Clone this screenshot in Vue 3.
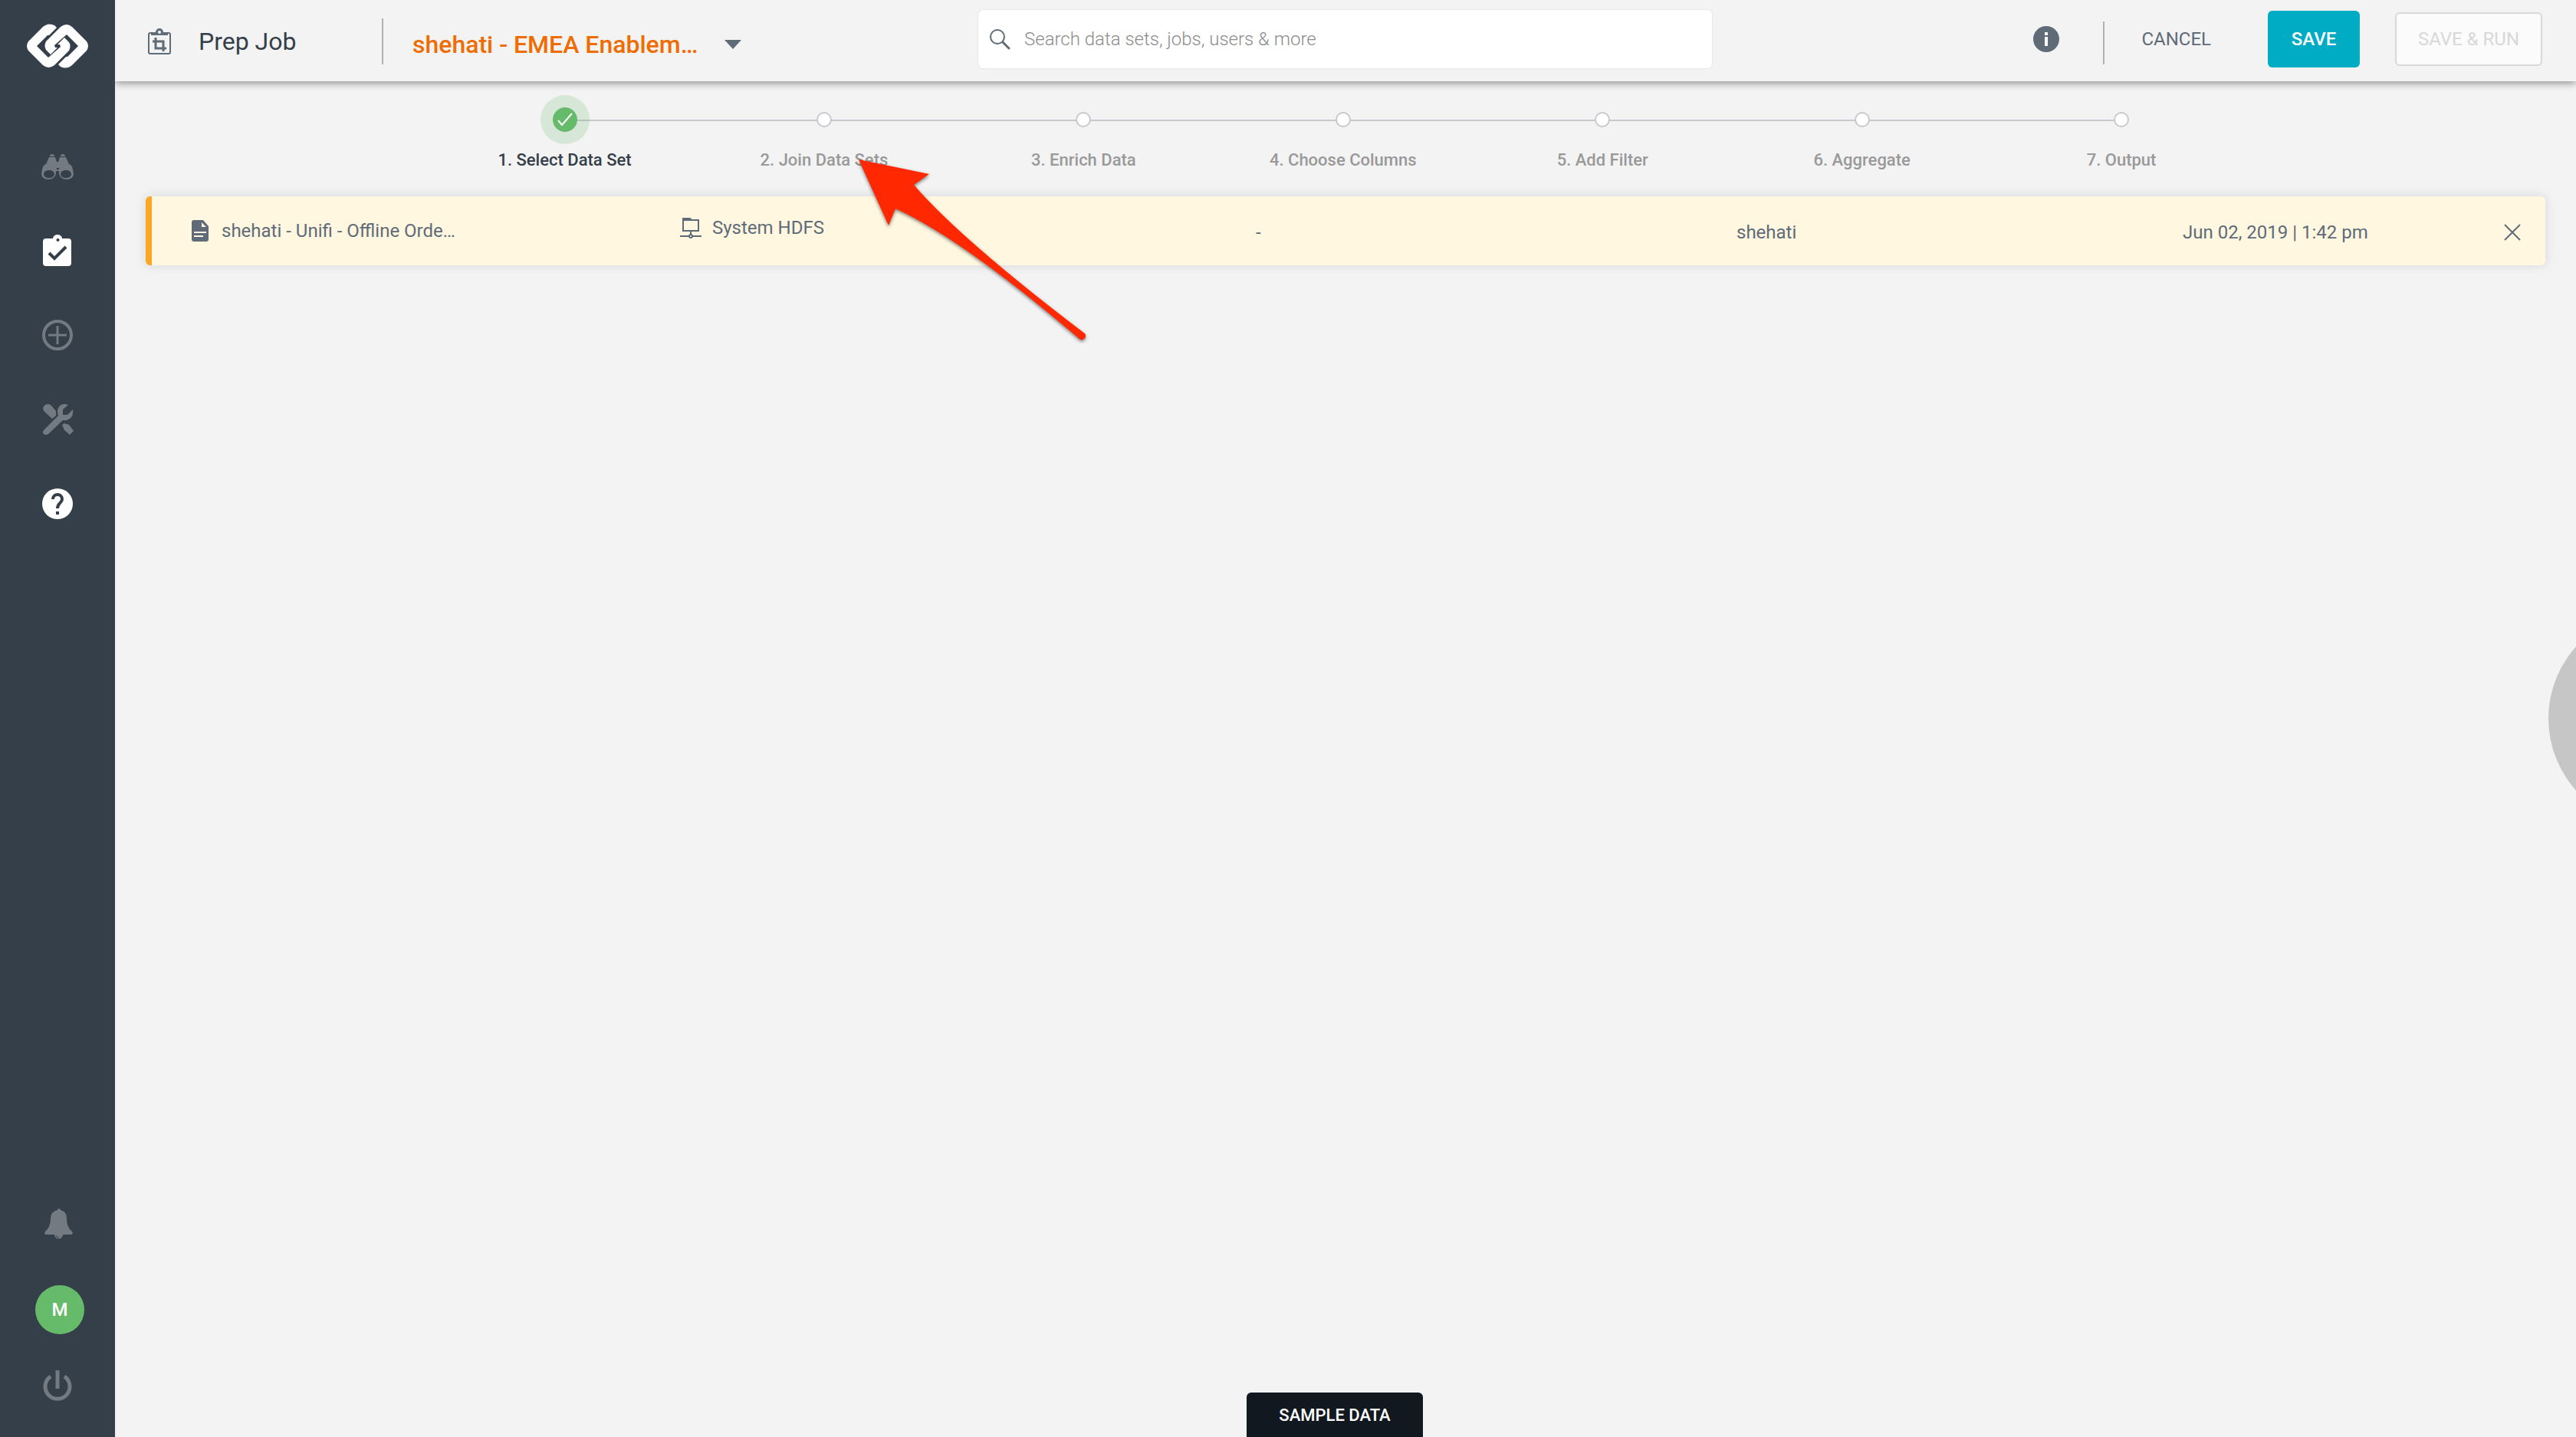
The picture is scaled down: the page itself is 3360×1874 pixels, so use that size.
<script setup>
import { ref } from 'vue'

const query = ref('')
const steps = [
  '1. Select Data Set',
  '2. Join Data Sets',
  '3. Enrich Data',
  '4. Choose Columns',
  '5. Add Filter',
  '6. Aggregate',
  '7. Output',
]
const current = ref(0)
const link = 'M31 41L25 35Q22 30 25 24L44 5Q52-1 59 5L78 24Q82 30 78 36L59 55Q52 61 44 57L41 54 51 44H53L67 30 52 15 36 29 37 32H40z'
</script>

<template>
  <div class="app">
    <nav class="sidebar" aria-label="Main">
      <a class="logo" href="#" aria-label="Home">
        <svg width="80" height="60" viewBox="0 0 80 60" fill="#fff">
          <path :d="link" />
          <path :d="link" transform="rotate(180 40 30)" />
        </svg>
      </a>
      <div class="nav-group">
        <a class="nav-item" href="#" aria-label="Discover">
          <svg width="42" height="42" viewBox="0 0 42 42" fill="currentColor">
            <path d="M11 8a3 3 0 0 1 6 0zM25 8a3 3 0 0 1 6 0z" />
            <path fill-rule="evenodd" d="M10 9h8l2 6h2l2-6h8l4 9q4 1 5 7l1 6q-1 7-9 7t-10-7v-4h-4v4q-2 7-10 7t-9-7l1-6q1-6 5-7zM10 26c-4 0-7 2-7 5s3 5 7 5 7-2 7-5-3-5-7-5zm22 0c-4 0-7 2-7 5s3 5 7 5 7-2 7-5-3-5-7-5zM21 23a2 1 0 1 0 1 0z" />
          </svg>
        </a>
        <a class="nav-item on" href="#" aria-label="Jobs">
          <svg width="42" height="42" viewBox="0 0 42 42">
            <path fill="currentColor" fill-rule="evenodd" d="M6 5h9a6 5 0 0 1 12 0h8q4 0 4 4v28q0 4-4 4H6q-4 0-4-4V9q0-4 4-4zm15 0a2 2 0 1 0 1 0z" />
            <path d="M10 24l7 7 15-15" fill="none" stroke="#353f49" stroke-width="4" />
          </svg>
        </a>
        <a class="nav-item" href="#" aria-label="Create">
          <svg width="42" height="42" viewBox="0 0 42 42" fill="none" stroke="currentColor">
            <circle cx="21" cy="21" r="18" stroke-width="4" />
            <path d="M21 9v24M9 21h24" stroke-width="3" />
          </svg>
        </a>
        <a class="nav-item" href="#" aria-label="Tools">
          <svg width="42" height="42" viewBox="0 0 42 42" fill="currentColor">
            <path d="M4 11Q1 7 3 4t5-3q3 0 5 2l6 7v6l-5 4z" />
            <path d="M35 2q-9-3-13 4-2 5 0 10L3 35q-2 3 0 5t6 0l19-18q7 1 11-4 3-4 2-10l-7 7h-6V8z" />
            <path d="M27 28l3-2 6 2 6 8-5 5-7-6z" />
          </svg>
        </a>
        <a class="nav-item on" href="#" aria-label="Help">
          <svg width="42" height="42" viewBox="0 0 42 42">
            <circle cx="21" cy="21" r="20" fill="currentColor" />
            <path d="M15 15a6 6 0 0 1 12 0c0 5-6 5-6 12M21 31v4" fill="none" stroke="#353f49" stroke-width="4" />
          </svg>
        </a>
      </div>
      <div class="nav-foot">
        <a class="nav-item" href="#" aria-label="Notifications">
          <svg width="42" height="42" viewBox="0 0 42 42" fill="currentColor">
            <path d="M21 2a2 2 0 0 1 4 0q8 2 8 11 0 12 7 17 2 3-1 4H28a5 5 0 0 1-11 0H6q-3-1-1-4 7-6 7-17 0-9 9-11z" />
            <path d="M19 35q1 3 4 3" fill="none" stroke="#353f49" />
          </svg>
        </a>
        <button class="avatar" type="button">M</button>
        <a class="nav-item" href="#" aria-label="Sign out">
          <svg width="42" height="42" viewBox="0 0 42 42" fill="none" stroke="currentColor" stroke-width="5">
            <path d="M21 1v24M12 9a16 16 0 1 0 18 0" />
          </svg>
        </a>
      </div>
    </nav>

    <div class="page">
      <header class="topbar">
        <div class="heading">
          <svg class="job-icon" width="30" height="34" viewBox="0 0 30 34" fill="none" stroke="currentColor">
            <rect x="1" y="6" width="28" height="27" rx="2" stroke-width="2" />
            <path d="M4 9V5h6a5 5 0 0 1 10 0h6v4z" fill="currentColor" stroke="none" />
            <circle cx="15" cy="5" r="2" fill="#f3f3f3" stroke="none" />
            <path d="M6 17h14v13M10 12v14h14" stroke-width="3" />
          </svg>
          <h1>Prep Job</h1>
        </div>
        <button class="job-select" type="button">
          <span>shehati - EMEA Enablem…</span>
          <svg width="22" height="12" viewBox="0 0 22 12"><path d="M0 0h22L11 12z" fill="#606b78" /></svg>
        </button>
        <label class="search">
          <svg width="28" height="28" viewBox="0 0 28 28" fill="none" stroke="#606b78">
            <circle cx="11" cy="11" r="9" stroke-width="2" />
            <path d="M18 18l8 8" stroke-width="3" stroke-linecap="round" />
          </svg>
          <input v-model="query" type="search" placeholder="Search data sets, jobs, users &amp; more" aria-label="Search" />
        </label>
        <div class="actions">
          <button class="info" type="button" aria-label="Information">
            <svg width="34" height="34" viewBox="0 0 34 34">
              <circle cx="17" cy="17" r="17" fill="#606b78" />
              <path d="M17 8v4M17 14v12" stroke="#fff" stroke-width="4" />
            </svg>
          </button>
          <span class="divider"></span>
          <button class="cancel" type="button">CANCEL</button>
          <button class="save" type="button">SAVE</button>
          <button class="run" type="button" disabled>SAVE &amp; RUN</button>
        </div>
      </header>

      <main>
        <ol class="steps">
          <li v-for="(step, i) in steps" :key="step" :class="{ active: i === current }">
            <span class="marker">
              <svg v-if="i === current" width="22" height="20" viewBox="0 0 22 20" fill="none" stroke="#fff" stroke-width="2">
                <path d="M2 11l5 6L20 2" />
              </svg>
            </span>
            <span>{{ step }}</span>
          </li>
        </ol>

        <section class="dataset" aria-label="Selected data set">
          <div class="name">
            <svg width="22" height="28" viewBox="0 0 22 28">
              <path d="M3 0h12l7 8v17q0 3-3 3H3q-3 0-3-3V3q0-3 3-3z" fill="#606b78" />
              <path d="M13 3v6h6zM3 15h16v2H3zM3 20h12v2H3z" fill="#fff7e0" />
            </svg>
            <span>shehati - Unifi - Offline Orde…</span>
          </div>
          <div class="source">
            <svg width="28" height="28" viewBox="0 0 28 28" fill="none" stroke="#606b78" stroke-width="2">
              <path d="M4 2h9l2 2h9v14H4z" /><path d="M4 1h9l2 4H4z" fill="#606b78" stroke="none" />
              <path d="M14 18v5M0 25h12M16 25h12" /><circle cx="14" cy="25" r="2" />
            </svg>
            <span>System HDFS</span>
          </div>
          <div>-</div>
          <div>shehati</div>
          <div>Jun 02, 2019 | 1:42 pm</div>
          <button type="button" aria-label="Remove">
            <svg width="22" height="22" viewBox="0 0 22 22" fill="none" stroke="#606b78" stroke-width="2"><path d="M1 1l20 20M21 1L1 21" /></svg>
          </button>
        </section>
      </main>

      <button class="sample" type="button">SAMPLE DATA</button>
    </div>

    <button class="drawer-handle" type="button" aria-label="Open panel"></button>
    <svg class="pointer" width="304" height="244" viewBox="0 0 304 244" aria-hidden="true">
      <path d="M4 4L96 23 76 37Q136 107 299 231a5 5 0 0 1-7 7Q140 108 52 68L43 90z" fill="#ff2800" />
    </svg>
  </div>
</template>

<style>
body {
  margin: 0;
  background: #f3f3f3;
}
</style>

<style scoped>
.app {
  position: relative;
  display: flex;
  min-height: 100vh;
  overflow: hidden;
  background: #f3f3f3;
  color: #606b78;
  font: 24px/32px Roboto, sans-serif;
}
button {
  padding: 0;
  border: 0;
  background: none;
  color: inherit;
  font: inherit;
  cursor: pointer;
}
svg {
  display: block;
  flex: none;
}
.sidebar {
  position: relative;
  z-index: 1;
  display: flex;
  flex: none;
  flex-direction: column;
  align-items: center;
  box-sizing: border-box;
  width: 150px;
  padding: 30px 0 46px;
  background: #353f49;
}
.nav-group {
  display: flex;
  flex-direction: column;
  gap: 68px;
  margin-top: 106px;
}
.nav-item {
  color: #737a82;
}
.nav-item.on {
  color: #fff;
}
.nav-foot {
  display: flex;
  flex-direction: column;
  align-items: center;
  gap: 46px;
  margin-top: auto;
}
.nav-foot .avatar {
  width: 64px;
  height: 64px;
  margin: 12px 0 0 6px;
  border-radius: 50%;
  background: #66bb6a;
  color: #fff;
  font-weight: 500;
}
.page {
  display: flex;
  flex: 1;
  flex-direction: column;
  min-width: 0;
}
.topbar {
  display: flex;
  align-items: center;
  box-sizing: border-box;
  height: 106px;
  padding: 0 44px 4px 43px;
  box-shadow: 0 2px 10px rgba(0, 0, 0, 0.45);
}
.heading {
  display: flex;
  align-items: center;
  gap: 36px;
  box-sizing: border-box;
  width: 307px;
  height: 60px;
  margin-top: 6px;
  border-right: 2px solid #b0b3b8;
}
.job-icon {
  color: #606b78;
}
h1 {
  margin: 0;
  color: #353f49;
  font-size: 32px;
  font-weight: 400;
  line-height: 40px;
}
.job-select {
  display: flex;
  align-items: center;
  gap: 35px;
  width: 738px;
  margin: 14px 0 0 38px;
  color: #ef6c00;
  font-size: 32px;
  font-weight: 500;
  line-height: 40px;
}
.search {
  display: flex;
  flex: 0 1 957px;
  align-items: center;
  gap: 18px;
  box-sizing: border-box;
  height: 76px;
  padding: 0 14px;
  border-radius: 6px;
  background: #fff;
  box-shadow: 0 0 2px rgba(0, 0, 0, 0.15);
}
.search input {
  flex: 1;
  padding: 0;
  border: 0;
  outline: 0;
  background: none;
  color: #353f49;
  font: inherit;
  font-weight: 300;
}
.search input::placeholder {
  color: #8c8c8c;
  opacity: 1;
}
.actions {
  display: flex;
  align-items: center;
  margin-left: auto;
}
.divider {
  width: 2px;
  height: 56px;
  margin: 10px 48px 0 57px;
  background: #b0b3b8;
}
.cancel {
  margin-right: 74px;
}
.save {
  width: 120px;
  height: 74px;
  border-radius: 6px;
  background: #00acc4;
  color: #fff;
  font-weight: 500;
}
.run {
  width: 192px;
  height: 70px;
  margin-left: 46px;
  border: 2px solid #d8d8d8;
  border-radius: 6px;
  background: #fbfbfb;
  color: #d8d8d8;
}
.steps {
  display: grid;
  grid-template-columns: repeat(7, 1fr);
  margin: 0;
  padding: 18px 13.2% 0 13%;
  list-style: none;
  color: #999;
  font-size: 22px;
  font-weight: 500;
}
.steps li {
  position: relative;
  display: flex;
  flex-direction: column;
  align-items: center;
  gap: 5px;
}
.steps li + li::before {
  content: '';
  position: absolute;
  top: 32px;
  right: 50%;
  width: 100%;
  height: 2px;
  background: #c8c8cf;
}
.marker {
  z-index: 1;
  box-sizing: border-box;
  width: 20px;
  height: 20px;
  margin: 22px 0;
  border: 2px solid #c8c8cf;
  border-radius: 50%;
  background: #fff;
}
.active {
  color: #353f49;
}
.active .marker {
  display: flex;
  align-items: center;
  justify-content: center;
  width: 64px;
  height: 64px;
  margin: 0;
  border: 16px solid rgba(102, 187, 106, 0.2);
  background: #66bb6a;
  background-clip: padding-box;
}
.dataset {
  display: grid;
  grid-template-columns: 637fr 751fr 627fr 582fr 419fr 54fr;
  align-items: center;
  box-sizing: border-box;
  height: 90px;
  margin: 31px 40px 0;
  padding: 4px 0 0 52px;
  border-left: 8px solid #f9a825;
  border-radius: 6px;
  background: #fff7e0;
  box-shadow: 0 0 14px rgba(96, 107, 120, 0.2);
}
.name,
.source {
  display: flex;
  align-items: center;
  gap: 17px;
  padding-bottom: 4px;
}
.source {
  gap: 14px;
  padding-bottom: 12px;
}
.sample {
  align-self: center;
  width: 230px;
  height: 58px;
  margin-top: auto;
  margin-right: 28px;
  padding-top: 2px;
  border-radius: 6px 6px 0 0;
  background: #111820;
  color: #fff;
  font-size: 22px;
  font-weight: 500;
}
.drawer-handle {
  position: absolute;
  top: 50%;
  right: -244px;
  width: 280px;
  height: 280px;
  border-radius: 50%;
  background: #c6c6c6;
  transform: translateY(-50%);
}
.pointer {
  position: absolute;
  top: 204px;
  left: 1116px;
  filter: drop-shadow(0 2px 2px rgba(0, 0, 0, 0.5));
  pointer-events: none;
}
</style>
